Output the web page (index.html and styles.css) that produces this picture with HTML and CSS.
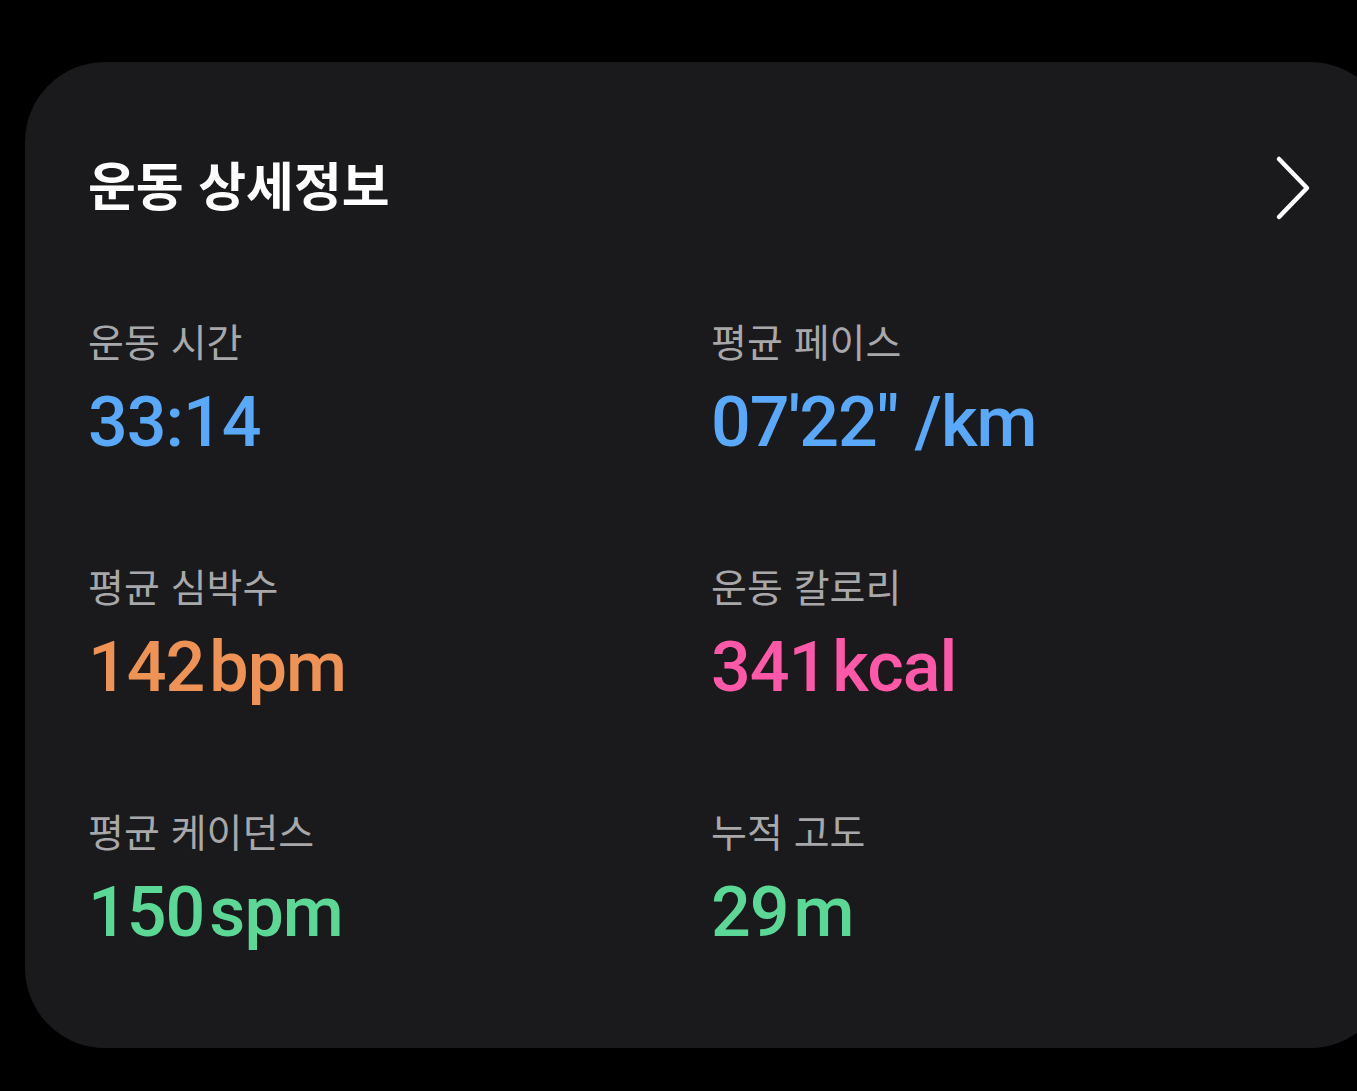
FILE: index.html
```html
<!DOCTYPE html>
<html lang="ko">
<head>
    <meta charset="UTF-8">
    <meta name="viewport" content="width=device-width, initial-scale=1.0">
    <title>운동 상세정보</title>
    <link rel="stylesheet" href="styles.css">
</head>
<body>

    <div class="card">
        <div class="card-header">
            <h1>운동 상세정보</h1>
            <svg class="chevron" width="40" height="70" viewBox="0 0 40 70">
                <path d="M6 4 L34 33 L6 62" fill="none" stroke="#fff" stroke-width="4.5" stroke-linecap="round" stroke-linejoin="round"/>
            </svg>
        </div>

        <div class="stats">
            <div class="stat">
                <div class="label">운동 시간</div>
                <div class="value blue">33:14</div>
            </div>
            <div class="stat">
                <div class="label">평균 페이스</div>
                <div class="value blue">07'22" /km</div>
            </div>
            <div class="stat">
                <div class="label">평균 심박수</div>
                <div class="value orange">142<span class="unit">bpm</span></div>
            </div>
            <div class="stat">
                <div class="label">운동 칼로리</div>
                <div class="value pink">341<span class="unit">kcal</span></div>
            </div>
            <div class="stat">
                <div class="label">평균 케이던스</div>
                <div class="value green">150<span class="unit">spm</span></div>
            </div>
            <div class="stat">
                <div class="label">누적 고도</div>
                <div class="value green">29<span class="unit">m</span></div>
            </div>
        </div>
    </div>

</body>
</html>
```

FILE: styles.css
```css
html, body {
    overflow: hidden;
}

body {
    margin: 0;
    background-color: #000;
    font-family: Roboto, "Noto Sans CJK KR", sans-serif;
}

.card {
    margin: 62px 0 0 25px;
    width: 1365px;
    height: 986px;
    box-sizing: border-box;
    padding: 0 0 0 63px;
    background-color: #1a1a1c;
    border-radius: 80px;
}

.card-header {
    display: flex;
    align-items: center;
    justify-content: space-between;
    width: 1225px;
    padding-top: 84px;
    height: 76px;
}

.card-header h1 {
    margin: 0;
    color: #fff;
    font-family: "Noto Sans CJK KR", sans-serif;
    font-size: 52px;
    font-weight: 700;
    line-height: 76px;
}

.chevron {
    margin-top: 12px;
}

.stats {
    display: grid;
    grid-template-columns: 623px 623px;
    grid-auto-rows: 245px;
    padding-top: 93px;
}

.label {
    color: #a8a8aa;
    font-family: "Noto Sans CJK KR", sans-serif;
    font-size: 39px;
    line-height: 50px;
}

.value {
    margin-top: 22px;
    font-size: 70px;
    font-weight: 500;
    line-height: 70px;
    letter-spacing: -1px;
}

.unit {
    margin-left: 5px;
}

.blue { color: #5aa8fa; }
.orange { color: #ee9355; }
.pink { color: #ff58a8; }
.green { color: #5bd896; }
```
